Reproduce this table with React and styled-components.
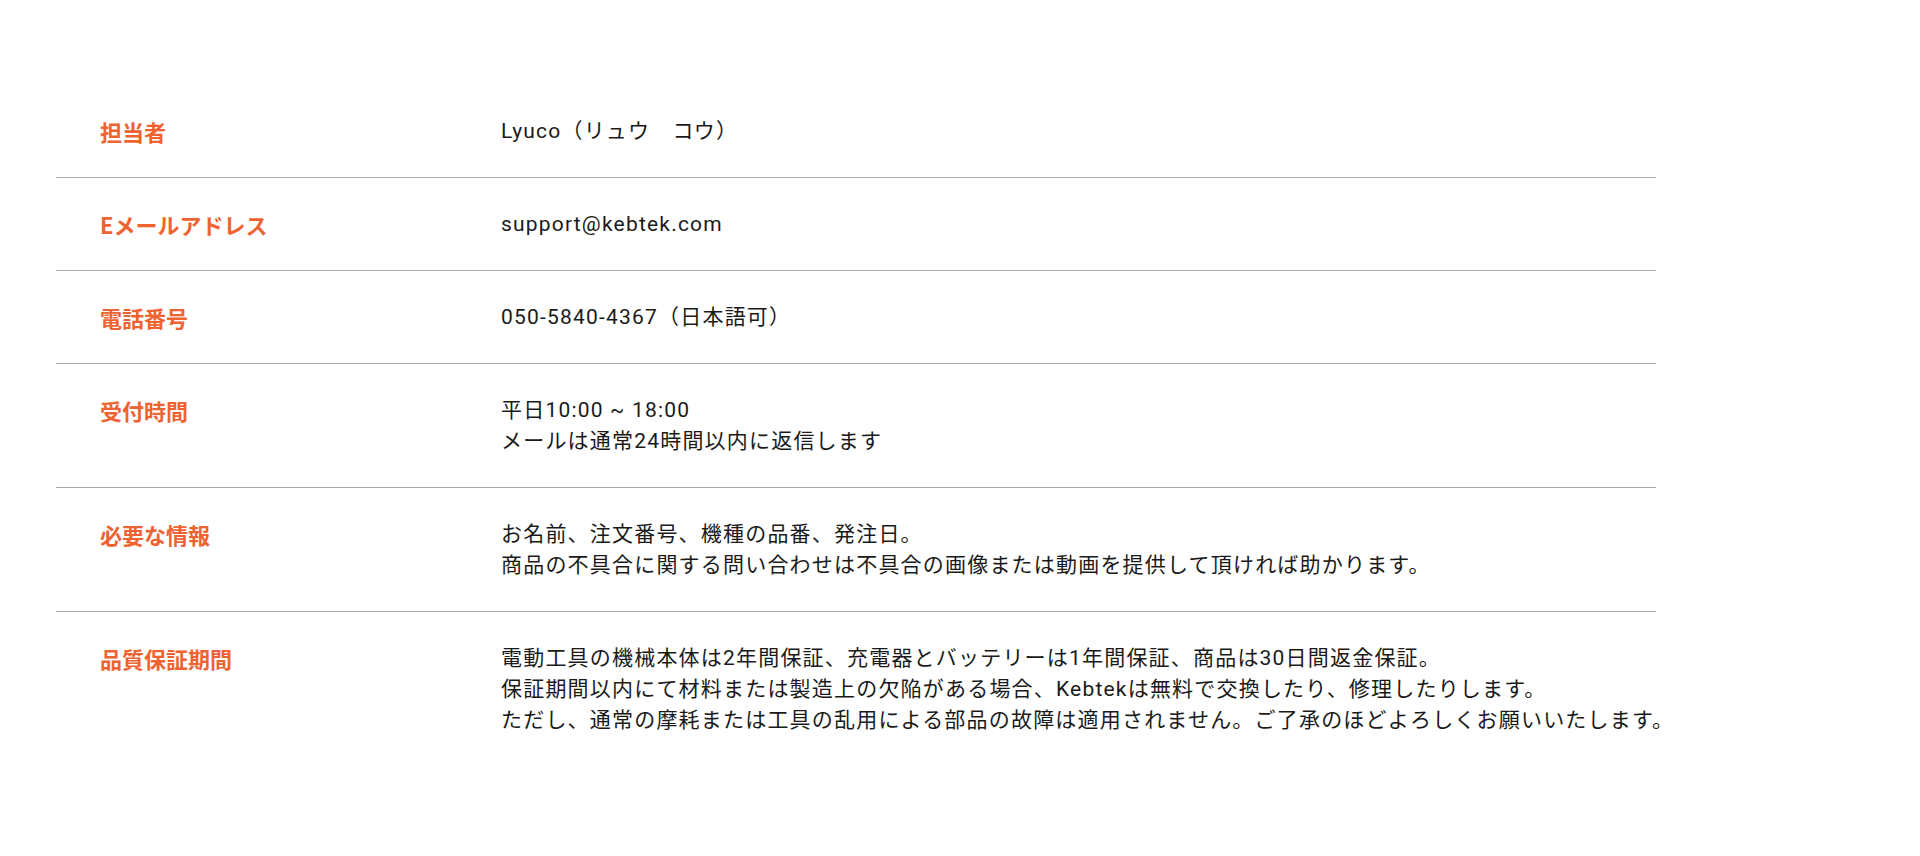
import React from "react";
import styled, { createGlobalStyle } from "styled-components";

const rows = [
  { label: "担当者", lines: ["Lyuco（リュウ　コウ）"] },
  { label: "Eメールアドレス", lines: ["support@kebtek.com"] },
  { label: "電話番号", lines: ["050-5840-4367（日本語可）"] },
  { label: "受付時間", lines: ["平日10:00 ~ 18:00", "メールは通常24時間以内に返信します"] },
  {
    label: "必要な情報",
    lines: [
      "お名前、注文番号、機種の品番、発注日。",
      "商品の不具合に関する問い合わせは不具合の画像または動画を提供して頂ければ助かります。",
    ],
  },
  {
    label: "品質保証期間",
    lines: [
      "電動工具の機械本体は2年間保証、充電器とバッテリーは1年間保証、商品は30日間返金保証。",
      "保証期間以内にて材料または製造上の欠陥がある場合、Kebtekは無料で交換したり、修理したりします。",
      "ただし、通常の摩耗または工具の乱用による部品の故障は適用されません。ご了承のほどよろしくお願いいたします。",
    ],
  },
];

const App = () => {
  return (
    <>
      <GlobalStyle />
      <StPage>
        <StTable>
          {rows.map((row, i) => (
            <StRow key={row.label} last={i === rows.length - 1}>
              <StLabel>{row.label}</StLabel>
              <StValue>
                {row.lines.map((line) => (
                  <StLine key={line}>{line}</StLine>
                ))}
              </StValue>
            </StRow>
          ))}
        </StTable>
      </StPage>
    </>
  );
};

export default App;

const GlobalStyle = createGlobalStyle`
  body {
    margin: 0;
    background: #ffffff;
    font-family: "Noto Sans CJK JP", "Noto Sans", sans-serif;
  }
`;

const StPage = styled.div`
  width: 1920px;
  height: 856px;
  padding: 85px 0 0 56px;
  box-sizing: border-box;
  background: #ffffff;
`;

const StTable = styled.div`
  width: 1600px;
  display: flex;
  flex-direction: column;
`;

const StRow = styled.div`
  display: grid;
  grid-template-columns: 401px 1fr;
  padding: 31px 0 30px 44px;
  border-bottom: ${(props) => (props.last ? "none" : "1px solid #a9a9a9")};
`;

const StLabel = styled.div`
  font-size: 22px;
  line-height: 31px;
  font-weight: 700;
  color: #ee6331;
`;

const StValue = styled.div`
  display: flex;
  flex-direction: column;
  font-family: Roboto, "Noto Sans CJK JP", sans-serif;
  font-size: 21px;
  line-height: 31px;
  color: #1a1a1a;
  letter-spacing: 1.2px;
`;

const StLine = styled.div`
  white-space: nowrap;
`;
